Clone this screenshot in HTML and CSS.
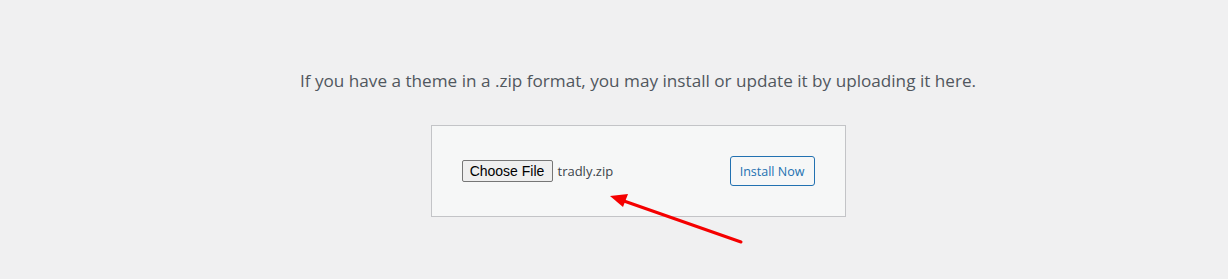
FILE: index.html
```html
<!DOCTYPE html>
<html lang="en">
<head>
  <meta charset="UTF-8" />
  <title>Upload Theme</title>
  <link rel="stylesheet" href="styles.css">
</head>
<body>
  <div class="upload-theme">
    <p class="install-help">If you have a theme in a .zip format, you may install or update it by uploading it here.</p>
    <form class="wp-upload-form">
      <div class="file-field">
        <button type="button" class="choose-file">Choose File</button>
        <span class="file-name">tradly.zip</span>
      </div>
      <button type="button" class="button">Install Now</button>
    </form>
  </div>

  <svg class="arrow" width="150" height="60" viewBox="0 0 150 60">
    <line x1="141" y1="52" x2="24" y2="11" stroke="#f50000" stroke-width="3" stroke-linecap="round" />
    <polygon points="10,6 28,4 23,17" fill="#f50000" />
  </svg>
</body>
</html>
```

FILE: styles.css
```css
body {
  background-color: #f0f0f1;
  margin: 0;
  font-family: 'Open Sans', 'Liberation Sans', sans-serif;
  color: #3c434a;
  font-size: 13px;
  position: relative;
  min-height: 279px;
}

.upload-theme {
  display: flex;
  flex-direction: column;
  align-items: center;
  padding-top: 68px;
  padding-left: 48px;
}

.install-help {
  color: #50575e;
  font-size: 17.15px;
  line-height: 26px;
  margin: 0;
  text-align: center;
}

.wp-upload-form {
  display: flex;
  justify-content: space-between;
  align-items: center;
  box-sizing: border-box;
  width: 415px;
  height: 92px;
  margin-top: 31px;
  padding: 0 30px;
  background-color: #f6f7f7;
  border: 1px solid #c3c4c7;
}

.file-field {
  display: flex;
  align-items: center;
  gap: 5px;
}

.choose-file {
  font-family: 'Liberation Sans', Arial, sans-serif;
  font-size: 14px;
  color: #000;
  background-color: #efefef;
  border: 1px solid #767676;
  border-radius: 2px;
  height: 22px;
  width: 91px;
  padding: 0;
}

.file-name {
  font-family: 'Open Sans', 'Liberation Sans', sans-serif;
  font-size: 13px;
  color: #3c434a;
}

.button {
  font-family: 'Open Sans', 'Liberation Sans', sans-serif;
  font-size: 12.5px;
  color: #2271b1;
  background-color: #f6f7f7;
  border: 1px solid #2271b1;
  border-radius: 3px;
  height: 30px;
  width: 85px;
  padding: 0;
}

.arrow {
  position: absolute;
  left: 600px;
  top: 190px;
}
```
